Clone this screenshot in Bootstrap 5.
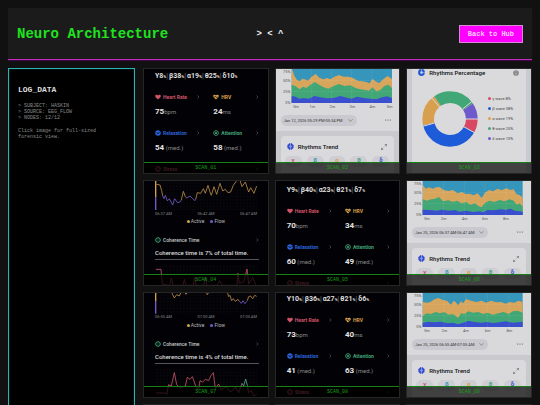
<!DOCTYPE html>
<html lang="en">
<head>
<meta charset="utf-8">
<meta name="viewport" content="width=device-width, initial-scale=1">
<title>Neuro Architecture</title>
<link href="https://cdn.jsdelivr.net/npm/bootstrap@5.3.0/dist/css/bootstrap.min.css" rel="stylesheet">
<style>
body{background:#111;color:#ddd;font-family:"Liberation Mono","Courier New",monospace;font-size:5px;line-height:6px}
svg{display:block}
.topbar{display:grid;grid-template-columns:1fr auto 1fr;min-height:52px;padding:0 9px;background:#1b1b1b;border-bottom:1px solid #c02cc0;box-shadow:0 1px 1px #3a0a3a}
.topbar h1{font-size:14px;line-height:16px;color:#1fe31f}
.face{font-size:9px;line-height:12px;color:#eee}
.btn-hub{font-size:7px;line-height:8px;padding:4px 8px;border:1px solid #d48ad4;border-radius:0;background:#f0f;color:#ffd0ff;font-weight:700}
.btn-hub:hover{background:#c0c;color:#fff}
.workspace{display:grid;grid-template-columns:127px minmax(0,1fr);gap:8px}
.log{background:#000;border:1px solid #2bb3b3;box-shadow:inset 0 0 1px #2bb3b3;padding:16px 9px;color:#8a8a8a}
.log h2{font-size:8px;line-height:10px;color:#ddd;margin-bottom:8px}
.log p{margin-bottom:7px}
.scans{display:grid;grid-template-columns:repeat(3,minmax(0,1fr));grid-auto-rows:106px;gap:6px}
.scan{position:relative;overflow:hidden;margin:0;border:1px solid #262626;background:#020206;font-family:Roboto,sans-serif}
.scan figcaption{position:absolute;left:0;right:0;bottom:0;height:11px;border-top:1px solid #168016;background:rgba(0,0,0,.7);color:#15a015;font:5px/10px "Liberation Mono",monospace;text-align:center}
.scan svg.plot{width:100%;height:auto}
.plot text{font-size:12px}
.vitals{padding:2px 9px 0 11px}
.vitals.lower{padding-top:4px}
.vitals.upper{padding-top:1px}
.waves{font-size:7px;line-height:10px;font-weight:700;color:#ddd;margin-bottom:11px;white-space:nowrap}
.waves small{font-size:4px}
.waves i{font-style:normal;font-weight:400;color:#777;margin:0 1px 0 0}
.metrics{display:grid;grid-template-columns:1fr 1fr;gap:12px 13px}
.metric h3{display:flex;align-items:center;gap:2px;font-size:5px;line-height:8px;font-weight:700;margin:0 0 6px;white-space:nowrap}
.ico{width:6px;height:6px;flex:none}
.go{width:4px;height:4px;margin-left:auto;color:#777}
.reading{font-size:8px;line-height:10px;font-weight:700;color:#e4e4e4;white-space:nowrap}
.reading span{font-size:6px;font-weight:400;color:#888}
.red{color:#cf5468}.gold{color:#d8a24a}.blue{color:#2b62d8}.green{color:#43a578}
.session .key{gap:6px;line-height:6px;margin:3px 0 12px;color:#bbb}
.session .key span::before{content:"";display:inline-block;width:3px;height:3px;border-radius:50%;background:#d8a24a;margin-right:1px}
.session .key .flow::before{background:#7a5bd0}
.coherence{padding:0 9px 0 11px}
.coherence h3{font-size:5px;line-height:8px;gap:2px;color:#ccc;margin:0 0 5px}
.coherence p{font-size:6px;font-weight:500;color:#ddd;line-height:8px;margin:0 0 3px;padding-bottom:2px;border-bottom:1px solid #555;white-space:nowrap}
.rhythm{background:#d9d9db;color:#333}
.range{margin:5px 8px 5px 5px}
.pill{border:0;border-radius:6px;background:#c9c9cf;color:#333;font:4px/7px Roboto,sans-serif;padding:2px 4px 2px 3px;white-space:nowrap;gap:5px}
.more{width:6px;height:6px}
.trend-zone{background:#cacace;padding:5px 5px 0;height:50px}
.trend{background:#dadadc;border-radius:4px;height:45px;padding:6px 7px 0 6px}
.trend h3,.share h3{font-size:6px;line-height:10px;font-weight:500;color:#111;margin:0;gap:4px;white-space:nowrap}
.trend .ico,.share .ico{width:7px;height:7px}
.chips{margin:4px -2px 0;gap:5px}
.chips b{flex:1;height:11px;line-height:8px;font-size:6px;text-align:center;border-radius:5px;background:#cdcdd3}
.side{background:#c9c9d2}
.share{background:#dadadc;margin:0 5px;height:104px;padding:0 7px 0 6px}
.share h3{height:7px;line-height:7px}
.donut{width:56px;height:56px;flex:none}
.share .body{margin-top:15px;padding-left:4px}
.share ul{margin:0 0 0 10px;font-size:4px;line-height:10px;color:#444;white-space:nowrap}
.share li::before{content:"";display:inline-block;width:3px;height:3px;border-radius:50%;background:currentColor;margin-right:1px}
.share li span{color:#444}
.beta{color:#3595bb}.delta{color:#3a4fce}
.k1{color:#d94863}.k2{color:#1d5bd8}.k3{color:#d8a04e}.k4{color:#42a777}.k5{color:#6f5acb}
</style>
</head>
<body class="vh-100 overflow-hidden d-flex flex-column p-2 pb-0 gap-2">
<svg width="0" height="0" class="position-absolute" aria-hidden="true">
<symbol id="heart" viewBox="0 0 12 12"><path fill="currentColor" d="M6 11 1.2 6.3C-.6 4.2.6 1.3 3.1 1.3 4.5 1.3 5.5 2.1 6 3c.5-.9 1.5-1.7 2.9-1.7 2.5 0 3.7 2.9 1.9 5z"/></symbol>
<symbol id="pulse" viewBox="0 0 12 12"><path fill="currentColor" d="M6 11 1.2 6.3C-.6 4.2.6 1.3 3.1 1.3 4.5 1.3 5.5 2.1 6 3c.5-.9 1.5-1.7 2.9-1.7 2.5 0 3.7 2.9 1.9 5z"/><path fill="none" stroke="#020206" d="M1 6h3l1-2 2 4 1-2h3"/></symbol>
<symbol id="calm" viewBox="0 0 12 12"><circle cx="6" cy="6" r="5.5" fill="currentColor"/><path fill="none" stroke="#020206" stroke-width="1.3" d="m3 4 3 4 4-5"/></symbol>
<symbol id="target" viewBox="0 0 12 12"><circle cx="6" cy="6" r="4.7" fill="none" stroke="currentColor" stroke-width="1.8"/><path stroke="currentColor" stroke-width="1.6" d="m4 4 4 4m0-4L4 8"/></symbol>
<symbol id="ring" viewBox="0 0 12 12"><circle cx="6" cy="6" r="4.6" fill="none" stroke="currentColor" stroke-width="2"/><circle cx="6" cy="6" r="1.6" fill="currentColor" opacity=".5"/></symbol>
<symbol id="chev" viewBox="0 0 8 8"><path fill="none" stroke="currentColor" d="m3 1 3 3-3 3"/></symbol>
<symbol id="down" viewBox="0 0 12 12"><path fill="none" stroke="#666" stroke-width="1.4" d="m1 3 5 5 5-5"/></symbol>
<symbol id="dots" viewBox="0 0 18 18"><g fill="#555"><circle cx="2" cy="9" r="1.8"/><circle cx="9" cy="9" r="1.8"/><circle cx="16" cy="9" r="1.8"/></g></symbol>
<symbol id="brain" viewBox="0 0 21 21"><path fill="#3049d0" d="M9.800 1C7 0 5 2 5 4 1 5 0 8 1.500 10.500 0 14 2 17 5 17c0 3 3 4 4.800 3zM11.200 1C14 0 16 2 16 4c4 1 5 4 3.500 6.500C21 14 19 17 16 17c0 3-3 4-4.800 3z"/><path stroke="#d9d9db" stroke-width="1" d="M6 10.500h9M8 8v5m5-5v5"/></symbol>
<symbol id="grow" viewBox="0 0 18 18"><path fill="none" stroke="#555" stroke-width="1.600" d="M11 1h6v6M17 1l-6 6M7 17H1v-6m0 6 6-6"/></symbol>
<symbol id="pie" viewBox="0 0 21 21"><circle cx="10.500" cy="10.500" r="7" fill="none" stroke="#2457d6" stroke-width="6.500"/><path stroke="#dadadc" stroke-width="1.500" d="M10.500 0v7m3 4h8"/></symbol>
<symbol id="info" viewBox="0 0 18 18"><circle cx="9" cy="9" r="8.500" fill="#88888c"/><path stroke="#ddd" stroke-width="2" d="M9 4v2m0 2v6"/></symbol>
<pattern id="mesh" width="10" height="10" patternUnits="userSpaceOnUse"><path d="M0 0h10M0 0v10" stroke="#15151c" fill="none"/></pattern>
</svg>

<header class="topbar align-items-center">
<h1 class="fw-bold m-0 text-nowrap">Neuro Architecture</h1>
<span class="face fw-bold">&gt; &lt; ^</span>
<a href="#hub" class="btn btn-hub ms-auto">Back to Hub</a>
</header>

<main class="workspace flex-grow-1 overflow-hidden">
<aside class="log">
<h2 class="fw-bold mt-0">LOG_DATA</h2>
<p>&gt; SUBJECT: HASKIN<br>&gt; SOURCE: EEG_FLOW<br>&gt; NODES: 12/12</p>
<p>Click image for full-sized<br>forensic view.</p>
</aside>

<section class="scans">
<figure class="scan">
<div class="vitals">
<div class="waves">Y8<small>%</small><i>|</i>β38<small>%</small><i>|</i>α19<small>%</small><i>|</i>θ25<small>%</small><i>|</i>δ10<small>%</small></div>
<div class="metrics">
<div class="metric"><h3 class="red"><svg class="ico"><use href="#heart"/></svg>Heart Rate<svg class="go"><use href="#chev"/></svg></h3><div class="reading">75<span>bpm</span></div></div>
<div class="metric"><h3 class="gold"><svg class="ico"><use href="#pulse"/></svg>HRV<svg class="go"><use href="#chev"/></svg></h3><div class="reading">24<span>ms</span></div></div>
<div class="metric"><h3 class="blue"><svg class="ico"><use href="#calm"/></svg>Relaxation<svg class="go"><use href="#chev"/></svg></h3><div class="reading">54<span> (med.)</span></div></div>
<div class="metric"><h3 class="green"><svg class="ico"><use href="#target"/></svg>Attention<svg class="go"><use href="#chev"/></svg></h3><div class="reading">58<span> (med.)</span></div></div>
<div class="metric"><h3 class="red"><svg class="ico"><use href="#ring"/></svg>Stress</h3></div>
<div class="metric"><h3>&nbsp;<svg class="go"><use href="#chev"/></svg></h3></div>
</div></div>
<figcaption>SCAN_01</figcaption>
</figure>

<figure class="scan rhythm">
<svg class="plot" viewBox="17 15 371 122" role="img" aria-label="Rhythm bands over 5 minutes">
<path fill="#3595bb" d="M64 12h301v105H64z"/>
<path fill="#d8a55c" d="M64 117V12L72 35 80 48 88 52 96 44 104 46 112 50 124 38 136 30 148 42 160 46 170 42 180 46 192 38 206 33 220 38 235 38 248 42 262 50 275 52 288 54 298 58 306 45 316 52 326 58 340 44 352 36 365 45V117z"/>
<path fill="#42a777" d="M64 117V62L75 66 88 76 98 68 108 72 120 62 134 54 146 62 160 70 174 74 190 66 206 60 222 66 240 64 256 72 270 76 286 78 296 80 306 70 318 82 330 78 342 66 354 62 365 72V117z"/>
<path fill="#3a4fce" d="M64 117V96L76 98 86 104 100 102 116 104 132 96 150 100 170 103 190 102 210 96 230 101 244 104 260 98 280 102 300 104 318 106 335 100 350 97 365 102V117z"/>
<path stroke="#fff" opacity=".4" stroke-dasharray="3 3" d="M64 49h301M64 83h301M124 12v105M184 12v105M244 12v105M305 12v105"/>
<g fill="#555"><g text-anchor="end"><text x="60" y="26">75%</text><text x="60" y="54">50%</text><text x="60" y="87">25%</text><text x="60" y="121">0%</text></g><g text-anchor="middle"><text x="77" y="133">0m</text><text x="126" y="133">1m</text><text x="186" y="133">2m</text><text x="246" y="133">3m</text><text x="306" y="133">4m</text><text x="358" y="133">5m</text></g></g></svg>
<div class="range d-flex justify-content-between align-items-center"><button type="button" class="pill d-flex align-items-center">Jan 12, 2026 05:29 PM-05:34 PM<svg width="5" height="5"><use href="#down"/></svg></button><svg class="more"><use href="#dots"/></svg></div>
<div class="trend-zone"><div class="trend"><h3 class="d-flex align-items-center"><svg class="ico"><use href="#brain"/></svg>Rhythms Trend<svg class="more ms-auto"><use href="#grow"/></svg></h3><div class="chips d-flex"><b class="red">γ</b><b class="beta">β</b><b class="gold">α</b><b class="green">θ</b><b class="delta">δ</b></div></div></div>
<figcaption>SCAN_02</figcaption>
</figure>

<figure class="scan side">
<div class="share"><h3 class="d-flex align-items-center"><svg class="ico"><use href="#pie"/></svg>Rhythms Percentage<svg class="more ms-auto"><use href="#info"/></svg></h3>
<div class="body d-flex align-items-center">
<svg class="donut" viewBox="0 0 168 168" fill="none" stroke-width="35" role="img" aria-label="Share of each wave"><g>
<circle cx="84" cy="84" r="65.500" pathLength="100" stroke="#d94863" stroke-dasharray="8 92"/>
<circle cx="84" cy="84" r="65.500" pathLength="100" stroke="#1d5bd8" stroke-dasharray="38 62" stroke-dashoffset="-8"/>
<circle cx="84" cy="84" r="65.500" pathLength="100" stroke="#d8a04e" stroke-dasharray="19 81" stroke-dashoffset="-46"/>
<circle cx="84" cy="84" r="65.500" pathLength="100" stroke="#42a777" stroke-dasharray="25 75" stroke-dashoffset="-65"/>
<circle cx="84" cy="84" r="65.500" pathLength="100" stroke="#6f5acb" stroke-dasharray="10 90" stroke-dashoffset="-90"/></g>
<path stroke="#dadadc" stroke-width="3" d="M131 84h38M125 107l34 19M38 96 2 106M53 48 28 20M122 54l27-22"/></svg>
<ul class="list-unstyled"><li class="k1"><span>γ wave 8%</span></li><li class="k2"><span>β wave 38%</span></li><li class="k3"><span>α wave 19%</span></li><li class="k4"><span>θ wave 25%</span></li><li class="k5"><span>δ wave 10%</span></li></ul>
</div></div>
<figcaption>SCAN_03</figcaption>
</figure>

<figure class="scan session">
<svg class="plot" viewBox="12 15 371 102" fill="none" role="img" aria-label="Active and flow signal">
<path fill="url(#mesh)" d="M45 12h306v90H45z"/><path stroke="#d8a24a" stroke-width="4" d="M47 12v52"/><path stroke="#7a5bd0" stroke-width="4" d="M47 64v38"/>
<path stroke="#b98b48" stroke-width="2.500" d="M49 25 60 27 65 44 68 60M124 72 130 46 136 62 140 66M167 70 172 50 182 52 190 38 196 52 204 28 210 48 214 58 222 32 230 55 240 22 248 45 256 40 264 50 272 48 280 28 290 14 300 12 306 32 316 18 326 48 332 35 342 52 350 30"/>
<path stroke="#7358c4" stroke-width="2.500" d="M68 60 72 68 76 58 82 75 88 68 98 87 104 68 112 80 120 78 124 72M140 66 150 60 158 68 165 74 167 70"/>
<g fill="#888"><text x="45" y="116">06:37 AM</text><text x="198" y="116" text-anchor="middle">06:42 AM</text><text x="351" y="116" text-anchor="end">06:47 AM</text></g></svg>
<div class="key d-flex justify-content-center"><span>Active</span><span class="flow">Flow</span></div>
<div class="coherence"><h3 class="d-flex align-items-center"><svg class="ico green"><use href="#ring"/></svg>Coherence Time<svg class="go"><use href="#chev"/></svg></h3><p>Coherence time is 7% of total time.</p></div>
<svg class="plot" viewBox="12 260 371 80" fill="none"><path fill="url(#mesh)" d="M48 266h303v62H48z"/><path stroke="#c45465" stroke-width="2.500" d="M48 279h15l4 45 22 3 5-22 5 22h30l4-18 5 18h22l4-24 5 24h22l5-24 5 24h30l8-14 8 14h44l3-36 4 30 14-5 9-38 5 45 12-20 9 22"/></svg>
<figcaption>SCAN_04</figcaption>
</figure>

<figure class="scan">
<div class="vitals lower">
<div class="waves">Y9<small>%</small><i>|</i>β40<small>%</small><i>|</i>α23<small>%</small><i>|</i>θ21<small>%</small><i>|</i>δ7<small>%</small></div>
<div class="metrics">
<div class="metric"><h3 class="red"><svg class="ico"><use href="#heart"/></svg>Heart Rate<svg class="go"><use href="#chev"/></svg></h3><div class="reading">70<span>bpm</span></div></div>
<div class="metric"><h3 class="gold"><svg class="ico"><use href="#pulse"/></svg>HRV<svg class="go"><use href="#chev"/></svg></h3><div class="reading">34<span>ms</span></div></div>
<div class="metric"><h3 class="blue"><svg class="ico"><use href="#calm"/></svg>Relaxation<svg class="go"><use href="#chev"/></svg></h3><div class="reading">60<span> (med.)</span></div></div>
<div class="metric"><h3 class="green"><svg class="ico"><use href="#target"/></svg>Attention<svg class="go"><use href="#chev"/></svg></h3><div class="reading">49<span> (med.)</span></div></div>
<div class="metric"><h3 class="red"><svg class="ico"><use href="#ring"/></svg>Stress</h3></div>
<div class="metric"><h3>&nbsp;<svg class="go"><use href="#chev"/></svg></h3></div>
</div></div>
<figcaption>SCAN_05</figcaption>
</figure>

<figure class="scan rhythm">
<svg class="plot" viewBox="22 15 371 122" role="img" aria-label="Rhythm bands over 10 minutes">
<path fill="#3595bb" d="M69 12h300v105H69z"/>
<path fill="#d8a55c" d="M69 117V26L78 38 88 34 100 38 110 34 120 33 132 42 146 45 160 42 174 52 186 48 198 54 210 53 222 58 234 52 246 66 256 50 268 42 280 46 294 38 306 43 320 37 332 42 342 40 350 54 358 56 369 64V117z"/>
<path fill="#42a777" d="M69 117V70L82 74 94 70 106 68 118 63 130 76 146 73 160 78 172 74 186 82 200 78 212 86 226 82 236 90 246 94 256 80 270 74 284 78 300 72 314 76 330 70 342 74 352 86 360 82 369 92V117z"/>
<path fill="#3a4fce" d="M69 117V101L90 102 110 104 128 101 146 104 166 102 180 107 200 104 220 108 240 106 250 109 264 102 284 103 304 100 318 102 332 98 346 104 369 107V117z"/>
<path stroke="#fff" opacity=".4" stroke-dasharray="3 3" d="M69 49h300M69 83h300M131 12v105M194 12v105M256 12v105M319 12v105"/>
<g fill="#555"><g text-anchor="end"><text x="65" y="26">75%</text><text x="65" y="54">50%</text><text x="65" y="87">25%</text><text x="65" y="121">0%</text></g><g text-anchor="middle"><text x="82" y="133">0m</text><text x="132" y="133">2m</text><text x="195" y="133">4m</text><text x="256" y="133">6m</text><text x="319" y="133">8m</text></g></g></svg>
<div class="range d-flex justify-content-between align-items-center"><button type="button" class="pill d-flex align-items-center">Jan 25, 2026 06:37 AM-06:47 AM<svg width="5" height="5"><use href="#down"/></svg></button><svg class="more"><use href="#dots"/></svg></div>
<div class="trend-zone"><div class="trend"><h3 class="d-flex align-items-center"><svg class="ico"><use href="#brain"/></svg>Rhythms Trend<svg class="more ms-auto"><use href="#grow"/></svg></h3><div class="chips d-flex"><b class="red">γ</b><b class="beta">β</b><b class="gold">α</b><b class="green">θ</b><b class="delta">δ</b></div></div></div>
<figcaption>SCAN_06</figcaption>
</figure>

<figure class="scan session">
<svg class="plot" viewBox="12 15 371 77" fill="none" role="img" aria-label="Active and flow signal">
<path fill="url(#mesh)" d="M45 12h306v65H45z"/><path stroke="#d8a24a" stroke-width="4" d="M47 12v27"/><path stroke="#7a5bd0" stroke-width="4" d="M47 39v38"/>
<path stroke="#b98b48" stroke-width="2.500" d="M94 12 98 20 103 30 110 20 118 24 124 12M133 12 138 19 143 12M198 12 202 20 207 12M262 12 266 26 270 22 275 38 280 32 286 40 294 34 298 40M322 38 326 26 332 24 338 32 344 22 350 25"/>
<path stroke="#7358c4" stroke-width="2.500" d="M298 40 304 46 309 38 315 47 320 40 322 38"/>
<g fill="#888"><text x="45" y="91">06:55 AM</text><text x="198" y="91" text-anchor="middle">07:00 AM</text><text x="351" y="91" text-anchor="end">07:05 AM</text></g></svg>
<div class="key d-flex justify-content-center"><span>Active</span><span class="flow">Flow</span></div>
<div class="coherence"><h3 class="d-flex align-items-center"><svg class="ico green"><use href="#ring"/></svg>Coherence Time<svg class="go"><use href="#chev"/></svg></h3><p>Coherence time is 4% of total time.</p></div>
<svg class="plot" viewBox="12 235 371 95" fill="none"><path fill="url(#mesh)" d="M48 241h303v85H48z"/><path stroke="#c45465" stroke-width="2.500" d="M48 313 76 313 80 318 86 288 94 292 103 252 110 288 120 298 136 292 142 266 150 272 157 264 163 280 168 296 176 302 180 276 188 280 196 272 206 276 212 262 220 252 226 300 236 286 244 304 258 294 272 310 286 296 296 312 306 284M322 290 326 312 334 306 342 322 350 316"/><path stroke="#4fa890" stroke-width="2.500" d="m306 284 5 8 6-21 5 19"/></svg>
<figcaption>SCAN_07</figcaption>
</figure>

<figure class="scan">
<div class="vitals upper">
<div class="waves">Y10<small>%</small><i>|</i>β36<small>%</small><i>|</i>α27<small>%</small><i>|</i>θ21<small>%</small><i>|</i>δ6<small>%</small></div>
<div class="metrics">
<div class="metric"><h3 class="red"><svg class="ico"><use href="#heart"/></svg>Heart Rate<svg class="go"><use href="#chev"/></svg></h3><div class="reading">73<span>bpm</span></div></div>
<div class="metric"><h3 class="gold"><svg class="ico"><use href="#pulse"/></svg>HRV<svg class="go"><use href="#chev"/></svg></h3><div class="reading">40<span>ms</span></div></div>
<div class="metric"><h3 class="blue"><svg class="ico"><use href="#calm"/></svg>Relaxation<svg class="go"><use href="#chev"/></svg></h3><div class="reading">41<span> (med.)</span></div></div>
<div class="metric"><h3 class="green"><svg class="ico"><use href="#target"/></svg>Attention<svg class="go"><use href="#chev"/></svg></h3><div class="reading">63<span> (med.)</span></div></div>
<div class="metric"><h3 class="red"><svg class="ico"><use href="#ring"/></svg>Stress</h3></div>
<div class="metric"><h3>&nbsp;<svg class="go"><use href="#chev"/></svg></h3></div>
</div></div>
<figcaption>SCAN_08</figcaption>
</figure>

<figure class="scan rhythm">
<svg class="plot" viewBox="22 15 371 122" role="img" aria-label="Rhythm bands over 10 minutes">
<path fill="#3595bb" d="M69 12h300v105H69z"/>
<path fill="#d8a55c" d="M69 117V42L82 44 92 42 104 34 116 30 130 36 142 38 154 50 162 38 168 42 175 52 184 40 190 46 200 33 214 38 230 42 246 38 260 44 274 38 290 43 304 42 318 47 330 42 344 44 356 38 369 42V117z"/>
<path fill="#42a777" d="M69 117V84L80 76 94 78 108 72 120 76 134 72 146 80 158 78 166 82 175 90 184 76 194 78 206 70 220 74 236 72 250 78 264 74 280 80 296 76 312 72 326 78 340 70 354 68 369 74V117z"/>
<path fill="#3a4fce" d="M69 117V105L84 101 104 103 124 101 144 106 160 104 175 109 190 104 206 99 226 102 244 104 262 102 280 105 300 103 318 100 340 104 369 101V117z"/>
<path stroke="#fff" opacity=".4" stroke-dasharray="3 3" d="M69 49h300M69 83h300M133 12v105M198 12v105M263 12v105M328 12v105"/>
<g fill="#555"><g text-anchor="end"><text x="65" y="26">75%</text><text x="65" y="54">50%</text><text x="65" y="87">25%</text><text x="65" y="121">0%</text></g><g text-anchor="middle"><text x="82" y="133">0m</text><text x="134" y="133">2m</text><text x="199" y="133">4m</text><text x="264" y="133">6m</text><text x="329" y="133">8m</text></g></g></svg>
<div class="range d-flex justify-content-between align-items-center"><button type="button" class="pill d-flex align-items-center">Jan 25, 2026 06:55 AM-07:05 AM<svg width="5" height="5"><use href="#down"/></svg></button><svg class="more"><use href="#dots"/></svg></div>
<div class="trend-zone"><div class="trend"><h3 class="d-flex align-items-center"><svg class="ico"><use href="#brain"/></svg>Rhythms Trend<svg class="more ms-auto"><use href="#grow"/></svg></h3><div class="chips d-flex"><b class="red">γ</b><b class="beta">β</b><b class="gold">α</b><b class="green">θ</b><b class="delta">δ</b></div></div></div>
<figcaption>SCAN_09</figcaption>
</figure>

<figure class="scan"></figure>
<figure class="scan"></figure>
<figure class="scan rhythm"></figure>
</section>
</main>
<script src="https://cdn.jsdelivr.net/npm/bootstrap@5.3.0/dist/js/bootstrap.bundle.min.js"></script>
</body>
</html>
